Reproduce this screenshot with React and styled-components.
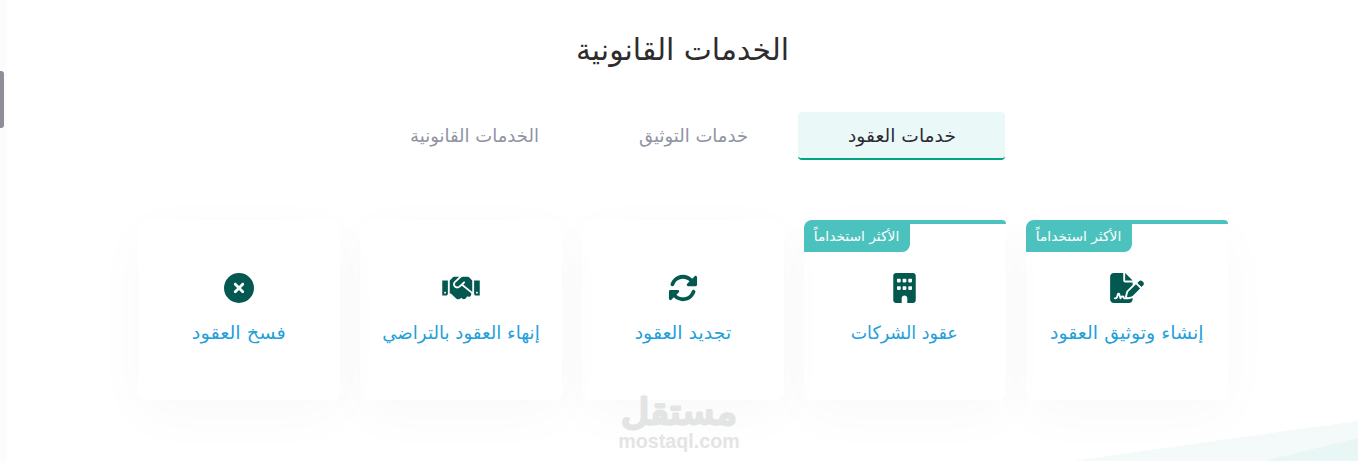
import React from 'react';
import styled, { createGlobalStyle } from 'styled-components';
import { FaHandshake } from 'react-icons/fa';
import {
  FaFileSignature,
  FaBuilding,
  FaRotate,
  FaCircleXmark,
} from 'react-icons/fa6';

const GlobalStyle = createGlobalStyle`
  *, *::before, *::after { box-sizing: border-box; }
  body {
    margin: 0;
    background: #fff;
    font-family: "DejaVu Sans", sans-serif;
    overflow: hidden;
  }
`;

const Page = styled.div`
  position: relative;
  display: flex;
  height: 461px;
  overflow: hidden;
`;

const ScrollTrack = styled.div`
  flex: none;
  width: 7px;
  padding-top: 71px;
  background: #fcfcfc;
`;

const ScrollThumb = styled.div`
  width: 4px;
  height: 57px;
  border-radius: 0 3px 3px 0;
  background: #918d98;
`;

const Section = styled.section`
  flex: 1;
  display: flex;
  flex-direction: column;
  align-items: center;
  padding-top: 25px;
`;

const Title = styled.h2`
  margin: 0;
  height: 50px;
  line-height: 50px;
  font-size: 29.8px;
  font-weight: 400;
  color: #2e2c2c;
`;

const Tabs = styled.div`
  display: flex;
  margin-top: 37px;
`;

const Tab = styled.button`
  display: flex;
  align-items: center;
  justify-content: center;
  width: ${(p) => p.$width}px;
  height: 48px;
  padding: 0;
  border: 0;
  border-bottom: 2px solid ${(p) => (p.$active ? '#05a582' : 'transparent')};
  border-radius: 4px;
  background: ${(p) => (p.$active ? '#ebf8f8' : 'transparent')};
  color: ${(p) => (p.$active ? '#2b2b33' : '#8f93a3')};
  font-family: inherit;
  font-size: 18px;
`;

const Text = styled.span`
  display: inline-block;
  white-space: nowrap;
  transform: scaleX(${(p) => p.$stretch || 1});
`;

const Cards = styled.div`
  display: flex;
  gap: 20px;
  margin-top: 60px;
`;

const CardShell = styled.div`
  position: relative;
  border-radius: 8px;
  box-shadow: 0 14px 56px rgba(0, 0, 0, 0.028);
`;

const Card = styled.article`
  position: relative;
  display: flex;
  flex-direction: column;
  align-items: center;
  width: 202px;
  height: 180px;
  padding-top: 53px;
  border-radius: 8px;
  background: #fff;
`;

const TopBar = styled.div`
  position: absolute;
  inset: 0 0 auto 8px;
  height: 4px;
  border-radius: 0 4px 0 0;
  background: #4cc2be;
`;

const Badge = styled.span`
  position: absolute;
  top: 0;
  left: 0;
  display: flex;
  align-items: center;
  justify-content: center;
  width: 106px;
  height: 32px;
  border-radius: 8px 0 8px 0;
  background: #4cc2be;
  color: #fff;
  font-size: 13.8px;
  white-space: nowrap;
`;

const IconBox = styled.div`
  display: flex;
  height: 30px;
  color: #035950;

  svg {
    width: ${(p) => p.$width}px;
    height: 30px;
  }
`;

const Label = styled.a`
  height: 30px;
  margin-top: 15px;
  line-height: 30px;
  font-size: 18px;
  color: #249fda;
`;

const Waves = styled.svg`
  position: absolute;
  right: 0;
  bottom: 0;
`;

const Watermark = styled.div`
  position: absolute;
  left: 618px;
  top: 393px;
  width: 122px;
  display: flex;
  flex-direction: column;
  align-items: center;
  color: #e3e4e4;
  font-weight: 700;
  white-space: nowrap;
`;

const WatermarkName = styled.svg`
  display: block;
  width: 122px;
  height: 36px;
  overflow: visible;

  text {
    font-size: 35px;
    font-weight: 400;
    fill: currentColor;
    stroke: currentColor;
    stroke-width: 2.8px;
    stroke-linejoin: round;
    text-anchor: middle;
  }
`;

const WatermarkUrl = styled.span`
  height: 24px;
  line-height: 24px;
  font-family: "Liberation Sans", Arial, sans-serif;
  font-size: 19.7px;
`;

const tabs = [
  { text: 'خدمات العقود', width: 207, stretch: 1.039, active: true },
  { text: 'خدمات التوثيق', width: 209 },
  { text: 'الخدمات القانونية', width: 229 },
];

const services = [
  { text: 'إنشاء وتوثيق العقود', Icon: FaFileSignature, iconWidth: 34, stretch: 1.055, popular: true },
  { text: 'عقود الشركات', Icon: FaBuilding, iconWidth: 23, stretch: 0.97, popular: true },
  { text: 'تجديد العقود', Icon: FaRotate, iconWidth: 30, stretch: 1.05 },
  { text: 'إنهاء العقود بالتراضي', Icon: FaHandshake, iconWidth: 38, stretch: 1.01 },
  { text: 'فسخ العقود', Icon: FaCircleXmark, iconWidth: 30, stretch: 1.073 },
];

export default function App() {
  return (
    <>
      <GlobalStyle />
      <Page>
        <ScrollTrack>
          <ScrollThumb />
        </ScrollTrack>
        <Section dir="rtl">
          <Title>الخدمات القانونية</Title>
          <Tabs>
            {tabs.map((t) => (
              <Tab key={t.text} $width={t.width} $active={t.active}>
                <Text $stretch={t.stretch}>{t.text}</Text>
              </Tab>
            ))}
          </Tabs>
          <Cards>
            {services.map(({ text, Icon, iconWidth, stretch, popular }) => (
              <CardShell key={text}>
                <Card>
                  {popular && <TopBar />}
                  {popular && <Badge>الأكثر استخداماً</Badge>}
                  <IconBox $width={iconWidth}>
                    <Icon />
                  </IconBox>
                  <Label>
                    <Text $stretch={stretch}>{text}</Text>
                  </Label>
                </Card>
              </CardShell>
            ))}
          </Cards>
        </Section>
        <Waves width="286" height="40" viewBox="0 0 286 40">
          <path d="M0 40 L286 0 V40 Z" fill="#f3faf9" />
          <path d="M192 40 L286 17 V40 Z" fill="#e9f6f6" />
        </Waves>
        <Watermark>
          <WatermarkName viewBox="0 0 122 36">
            <text x="55" y="31" transform="scale(1.11 1)">مستقل</text>
          </WatermarkName>
          <WatermarkUrl>mostaql.com</WatermarkUrl>
        </Watermark>
      </Page>
    </>
  );
}
